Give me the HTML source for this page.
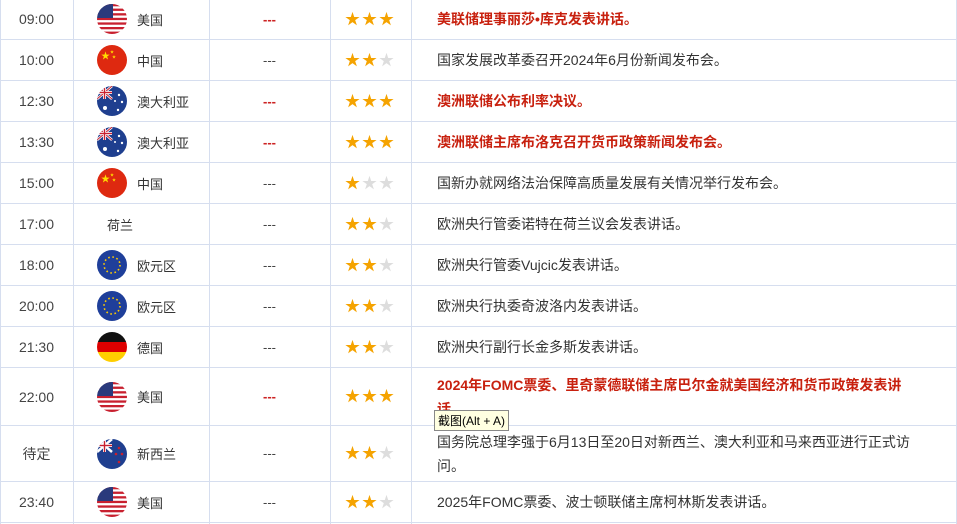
<!DOCTYPE html>
<html><head><meta charset="utf-8"><style>
body{margin:0;width:957px;height:524px;overflow:hidden;background:#fff;font-family:"Liberation Sans","Noto Sans CJK SC",sans-serif;color:#333;position:relative}
.r{position:absolute;left:0;width:957px;border-bottom:1px solid #d6deef}
.c{position:absolute;top:0;height:100%;display:flex;align-items:center}
.t{left:0;width:73px;justify-content:center;font-size:14px;color:#444}
.f{left:97px;width:30px}
.n{left:137px;font-size:13px;color:#333}
.d{left:209px;width:121px;justify-content:center;font-size:13px;color:#444}
.d.red{color:#c22;font-weight:bold}
.s{left:345px;font-size:15px;letter-spacing:2px;color:#f5a300;line-height:15px}
.s i{font-style:normal;color:#ddd}
.e{left:437px;width:476px;font-size:14px;line-height:24px;color:#333}
.e.red{color:#c8210f;font-weight:bold}
.v{position:absolute;top:0;height:524px;width:1px;background:#d6deef}
.tip{position:absolute;left:434px;top:410px;border:1px solid #888;background:#ffffe1;font-size:12px;padding:1px 3px;color:#000}
svg{display:block}
</style></head><body>
<div class="v" style="left:0"></div><div class="v" style="left:73px"></div><div class="v" style="left:209px"></div><div class="v" style="left:330px"></div><div class="v" style="left:411px"></div><div class="v" style="left:956px"></div>

<svg width="0" height="0" style="position:absolute"><defs>
<clipPath id="cc"><circle cx="15" cy="15" r="15"/></clipPath>
<g id="us"><g clip-path="url(#cc)"><rect width="30" height="30" fill="#fff"/><g fill="#c8202f"><rect y="0" width="30" height="2.3"/><rect y="4.6" width="30" height="2.3"/><rect y="9.2" width="30" height="2.3"/><rect y="13.8" width="30" height="2.3"/><rect y="18.4" width="30" height="2.3"/><rect y="23" width="30" height="2.3"/><rect y="27.6" width="30" height="2.4"/></g><rect width="16" height="14" fill="#2a3a7c"/></g></g>
<g id="cn"><circle cx="15" cy="15" r="15" fill="#de2910"/><text x="4" y="14" font-size="9" fill="#ffde00">★</text><text x="13" y="8" font-size="4" fill="#ffde00">★</text><text x="15" y="13" font-size="4" fill="#ffde00">★</text></g>
<g id="au"><g clip-path="url(#cc)"><rect width="30" height="30" fill="#1f3f8f"/><path d="M0 0L15 13M15 0L0 13" stroke="#fff" stroke-width="2.5"/><path d="M0 0L15 13M15 0L0 13" stroke="#c8202f" stroke-width="1"/><rect x="6" y="0" width="3" height="13" fill="#fff"/><rect x="0" y="5" width="15" height="3" fill="#fff"/><rect x="6.8" y="0" width="1.4" height="13" fill="#c8202f"/><rect x="0" y="5.8" width="15" height="1.4" fill="#c8202f"/><g fill="#fff"><circle cx="8" cy="22" r="2"/><circle cx="22" cy="9" r="1.2"/><circle cx="25" cy="16" r="1.2"/><circle cx="21" cy="24" r="1.2"/><circle cx="18" cy="15" r="1"/></g></g></g>
<g id="nz"><g clip-path="url(#cc)"><rect width="30" height="30" fill="#1f3f8f"/><path d="M0 0L15 13M15 0L0 13" stroke="#fff" stroke-width="2.5"/><rect x="6" y="0" width="3" height="13" fill="#fff"/><rect x="0" y="5" width="15" height="3" fill="#fff"/><rect x="6.8" y="0" width="1.4" height="13" fill="#c8202f"/><rect x="0" y="5.8" width="15" height="1.4" fill="#c8202f"/><g fill="#c8202f"><circle cx="22" cy="9" r="1.3"/><circle cx="25" cy="15" r="1.3"/><circle cx="19" cy="15" r="1.3"/><circle cx="22" cy="23" r="1.3"/></g></g></g>
<g id="eu"><circle cx="15" cy="15" r="15" fill="#1f3f9a"/><circle cx="15" cy="15" r="8" fill="none" stroke="#ffcc00" stroke-width="1.6" stroke-dasharray="1.6 2.6"/></g>
<g id="de"><g clip-path="url(#cc)"><rect width="30" height="10" fill="#111"/><rect y="10" width="30" height="10" fill="#dd0000"/><rect y="20" width="30" height="10" fill="#ffce00"/></g></g>
</defs></svg>

<div class="r" style="top:-1px;height:40px"><div class="c t">09:00</div><div class="c f"><svg width="30" height="30"><use href="#us"/></svg></div><div class="c n">美国</div><div class="c d red">---</div><div class="c s">★★★</div><div class="c e red">美联储理事丽莎•库克发表讲话。</div></div>
<div class="r" style="top:40px;height:40px"><div class="c t">10:00</div><div class="c f"><svg width="30" height="30"><use href="#cn"/></svg></div><div class="c n">中国</div><div class="c d">---</div><div class="c s">★★<i>★</i></div><div class="c e">国家发展改革委召开2024年6月份新闻发布会。</div></div>
<div class="r" style="top:81px;height:40px"><div class="c t">12:30</div><div class="c f"><svg width="30" height="30"><use href="#au"/></svg></div><div class="c n">澳大利亚</div><div class="c d red">---</div><div class="c s">★★★</div><div class="c e red">澳洲联储公布利率决议。</div></div>
<div class="r" style="top:122px;height:40px"><div class="c t">13:30</div><div class="c f"><svg width="30" height="30"><use href="#au"/></svg></div><div class="c n">澳大利亚</div><div class="c d red">---</div><div class="c s">★★★</div><div class="c e red">澳洲联储主席布洛克召开货币政策新闻发布会。</div></div>
<div class="r" style="top:163px;height:40px"><div class="c t">15:00</div><div class="c f"><svg width="30" height="30"><use href="#cn"/></svg></div><div class="c n">中国</div><div class="c d">---</div><div class="c s">★<i>★★</i></div><div class="c e">国新办就网络法治保障高质量发展有关情况举行发布会。</div></div>
<div class="r" style="top:204px;height:40px"><div class="c t">17:00</div><div class="c n" style="left:107px">荷兰</div><div class="c d">---</div><div class="c s">★★<i>★</i></div><div class="c e">欧洲央行管委诺特在荷兰议会发表讲话。</div></div>
<div class="r" style="top:245px;height:40px"><div class="c t">18:00</div><div class="c f"><svg width="30" height="30"><use href="#eu"/></svg></div><div class="c n">欧元区</div><div class="c d">---</div><div class="c s">★★<i>★</i></div><div class="c e">欧洲央行管委Vujcic发表讲话。</div></div>
<div class="r" style="top:286px;height:40px"><div class="c t">20:00</div><div class="c f"><svg width="30" height="30"><use href="#eu"/></svg></div><div class="c n">欧元区</div><div class="c d">---</div><div class="c s">★★<i>★</i></div><div class="c e">欧洲央行执委奇波洛内发表讲话。</div></div>
<div class="r" style="top:327px;height:40px"><div class="c t">21:30</div><div class="c f"><svg width="30" height="30"><use href="#de"/></svg></div><div class="c n">德国</div><div class="c d">---</div><div class="c s">★★<i>★</i></div><div class="c e">欧洲央行副行长金多斯发表讲话。</div></div>
<div class="r" style="top:368px;height:57px"><div class="c t">22:00</div><div class="c f"><svg width="30" height="30"><use href="#us"/></svg></div><div class="c n">美国</div><div class="c d red">---</div><div class="c s">★★★</div><div class="c e red" style="padding-top:5px;height:52px;overflow:hidden;display:block">2024年FOMC票委、里奇蒙德联储主席巴尔金就美国经济和货币政策发表讲话。</div></div>
<div class="r" style="top:426px;height:55px"><div class="c t">待定</div><div class="c f"><svg width="30" height="30"><use href="#nz"/></svg></div><div class="c n">新西兰</div><div class="c d">---</div><div class="c s">★★<i>★</i></div><div class="c e">国务院总理李强于6月13日至20日对新西兰、澳大利亚和马来西亚进行正式访问。</div></div>
<div class="r" style="top:482px;height:40px"><div class="c t">23:40</div><div class="c f"><svg width="30" height="30"><use href="#us"/></svg></div><div class="c n">美国</div><div class="c d">---</div><div class="c s">★★<i>★</i></div><div class="c e">2025年FOMC票委、波士顿联储主席柯林斯发表讲话。</div></div>
<div class="tip">截图(Alt + A)</div>
</body></html>
